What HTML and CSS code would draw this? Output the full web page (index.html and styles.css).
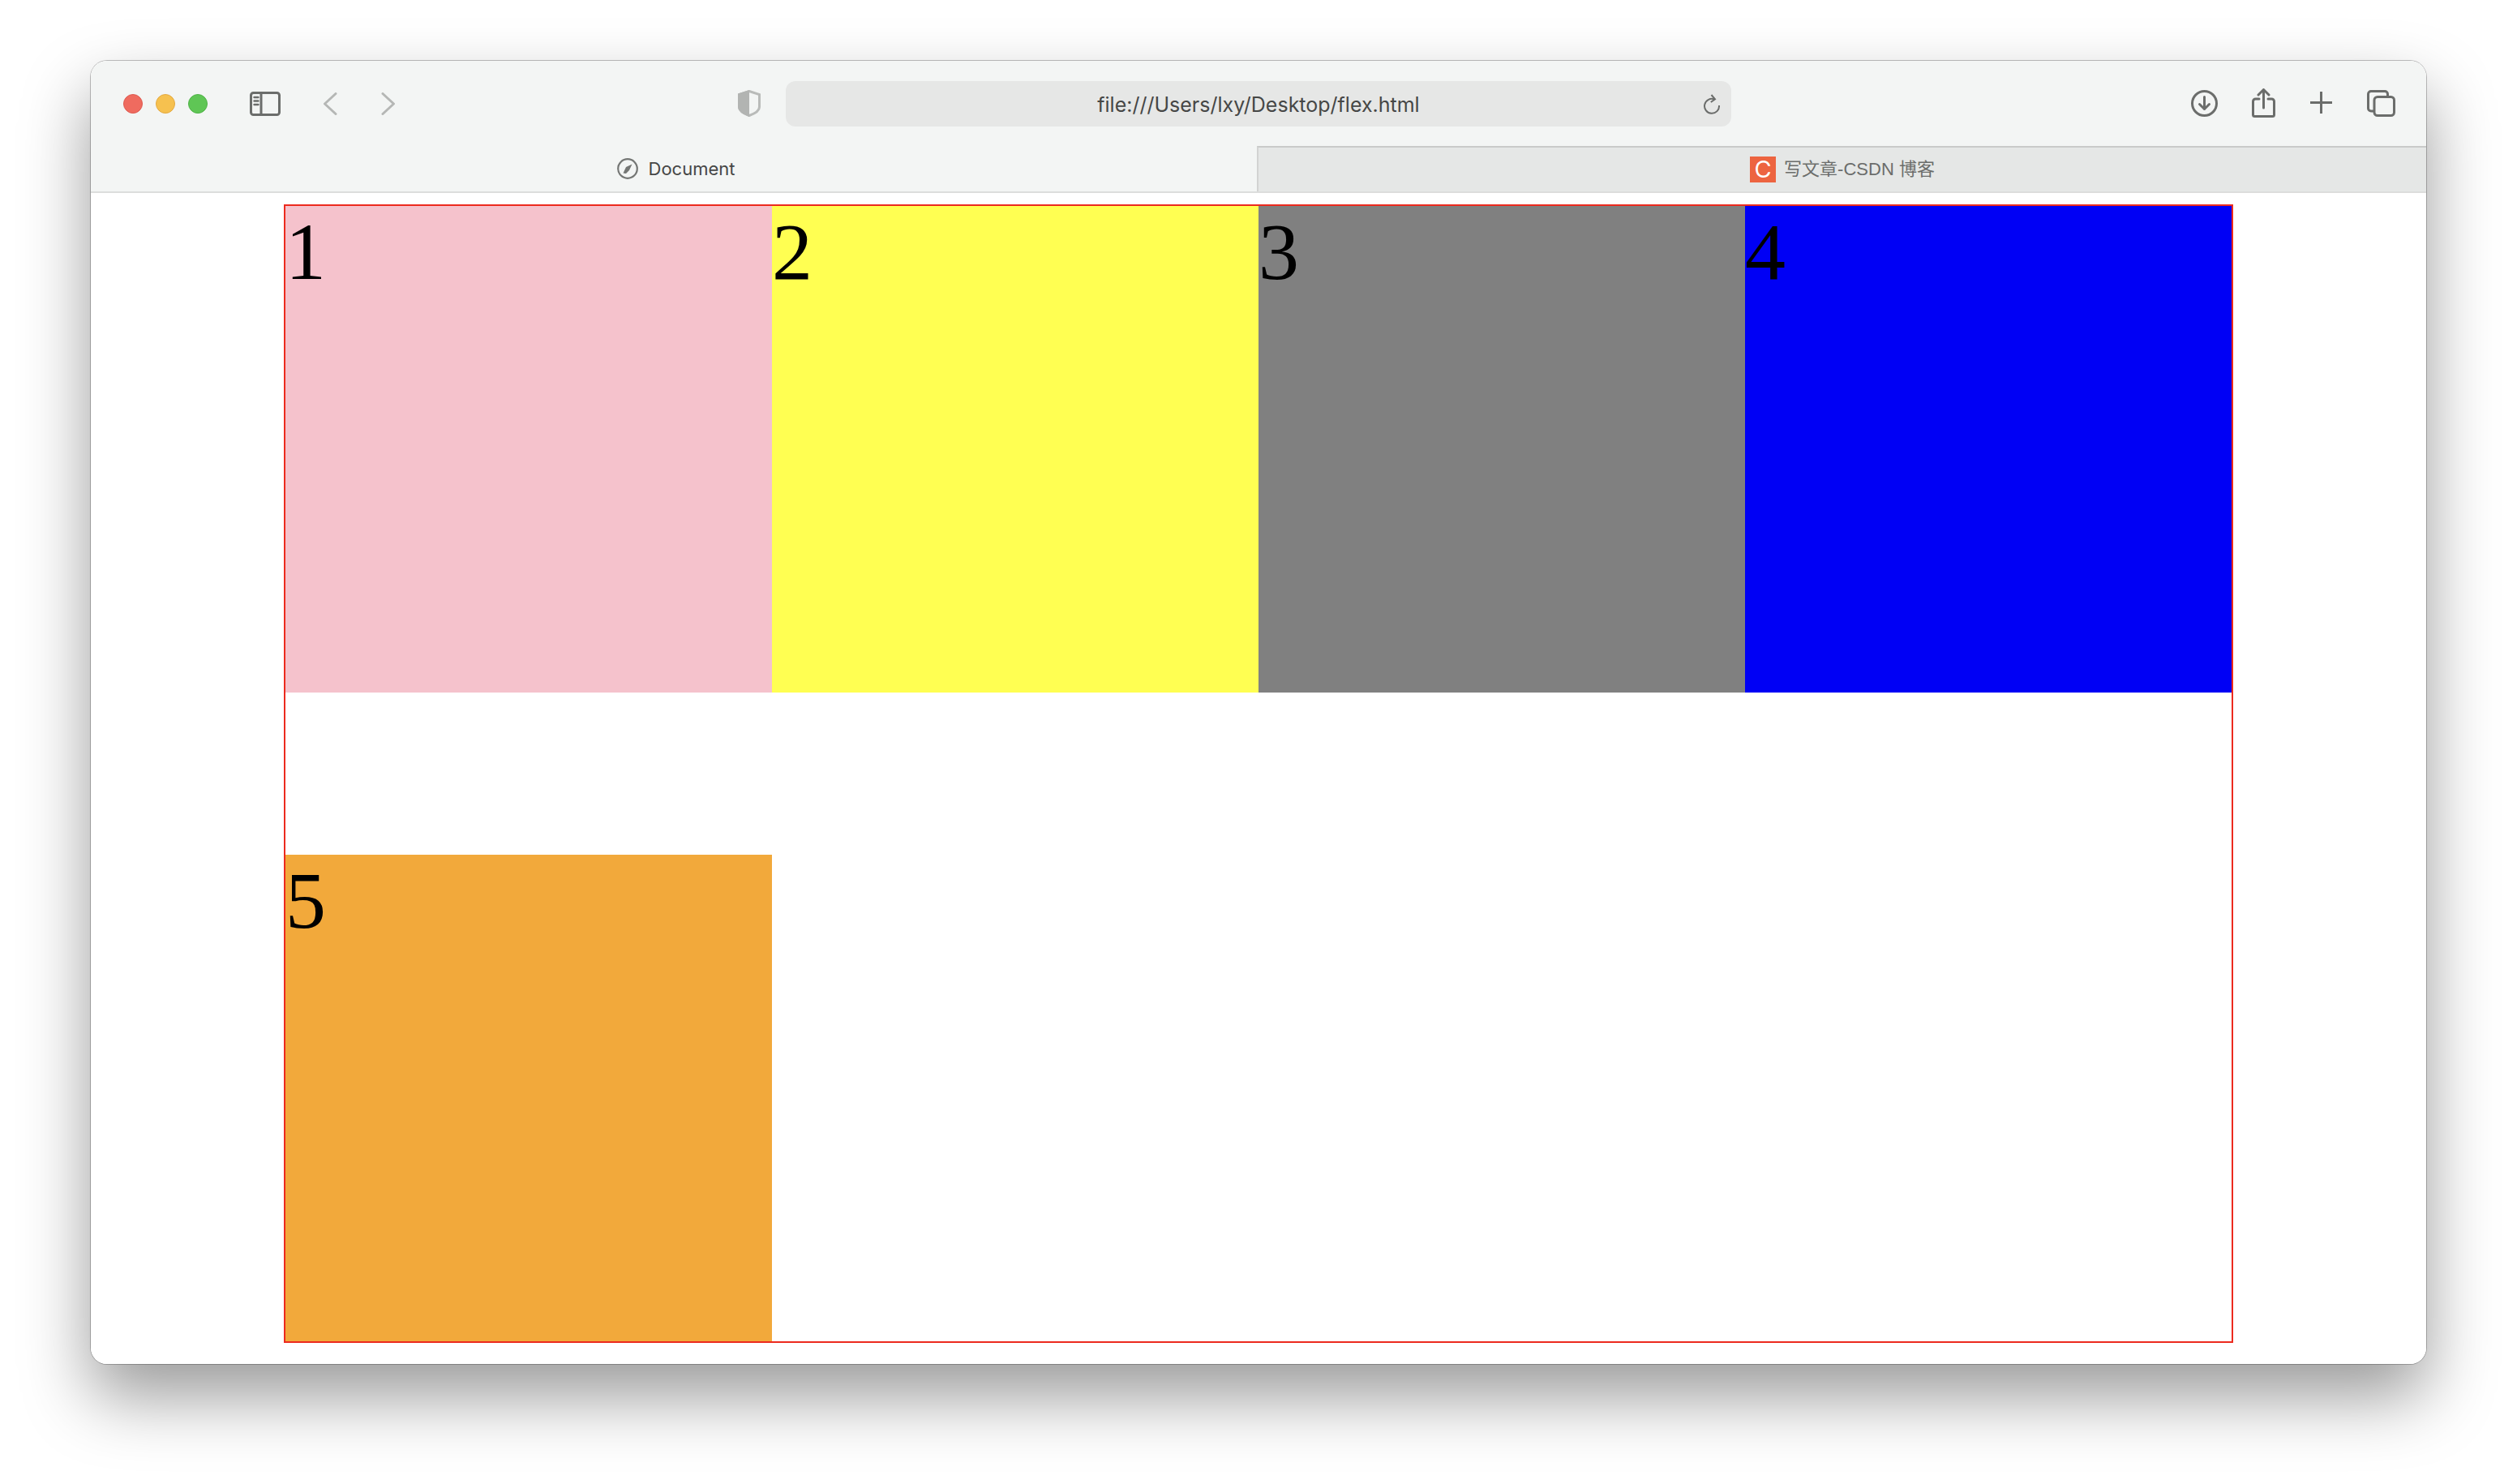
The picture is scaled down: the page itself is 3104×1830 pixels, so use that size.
FILE: index.html
```html
<!DOCTYPE html>
<html lang="en">
<head>
<meta charset="utf-8">
<title>Document</title>
<link rel="stylesheet" href="styles.css">
</head>
<body>
<div class="window">
  <header class="toolbar">
    <div class="lights">
      <span class="light light-red"></span>
      <span class="light light-yellow"></span>
      <span class="light light-green"></span>
    </div>
    <svg class="icon icon-sidebar" viewBox="0 0 38 30"><rect x="1.5" y="1.5" width="35" height="27" rx="3"/><path d="M14 1.5v27"/><path class="thin" d="M5.5 7h5M5.5 11.5h5M5.5 16h5"/></svg>
    <svg class="icon icon-back" viewBox="0 0 18 28"><path d="M16 1.5 2.5 14 16 26.500"/></svg>
    <svg class="icon icon-forward" viewBox="0 0 18 28"><path d="M2 1.500 15.500 14 2 26.500"/></svg>
    <svg class="icon-shield" viewBox="0 0 28 33"><path class="shield-line" d="M14 1.500 26.500 5.500V21C26.500 25 21 29 14 31.500 7 29 1.500 25 1.500 21V5.500Z"/><path class="shield-fill" d="M14 0 0 4.500V21C0 26 7 30.500 14 33Z"/></svg>
    <div class="address">
      <span class="url">file:///Users/lxy/Desktop/flex.html</span>
      <svg class="icon-reload" viewBox="0 0 22 25"><path d="M14.500 6.500A9 9 0 1 0 20 14"/><path d="M10.500 1 15 6.300 9.800 10"/></svg>
    </div>
    <div class="spacer"></div>
    <svg class="icon icon-download" viewBox="0 0 33 33"><circle cx="16.500" cy="16.500" r="15"/><path d="M16.500 8.500v15M10.500 17.500l6 6 6-6"/></svg>
    <svg class="icon icon-share" viewBox="0 0 29 36"><path d="M9 13H4.500A3 3 0 0 0 1.500 16v16.500a2 2 0 0 0 2 2h22a2 2 0 0 0 2-2V16a3 3 0 0 0-3-3H20"/><path d="M14.500 24V2M8 8l6.500-6.500L21 8"/></svg>
    <svg class="icon icon-plus" viewBox="0 0 27 27"><path d="M13.500 0v27M0 13.500h27"/></svg>
    <svg class="icon icon-tabs" viewBox="0 0 35 33"><path d="M8 26H5a3.500 3.500 0 0 1-3.500-3.500V5A3.500 3.500 0 0 1 5 1.500h17A3.500 3.500 0 0 1 25.500 5v3"/><rect x="9" y="8.500" width="24.500" height="23" rx="4"/></svg>
  </header>
  <nav class="tabs">
    <div class="tab tab-active">
      <svg class="icon-compass" viewBox="0 0 26 26"><circle cx="13" cy="13" r="11.800"/><path class="needle" d="M18.500 7.500 15 15 11 19 7.500 18.500 11 11Z"/></svg>
      <span>Document</span>
    </div>
    <div class="tab tab-inactive">
      <span class="favicon">C</span>
      <span class="tab-title">写文章-CSDN 博客</span>
    </div>
  </nav>
  <main class="page">
    <div class="flex-box">
      <div class="item item-pink">1</div>
      <div class="item item-yellow">2</div>
      <div class="item item-gray">3</div>
      <div class="item item-blue">4</div>
      <div class="item item-orange">5</div>
    </div>
  </main>
</div>
</body>
</html>
```

FILE: styles.css
```css
html, body {
  margin: 0;
  height: 1830px;
  overflow: hidden;
  background: #fff;
}

.window {
  position: relative;
  box-sizing: border-box;
  width: 2880px;
  height: 1607px;
  margin: 75px 0 0 112px;
  display: flex;
  flex-direction: column;
  border-radius: 20px;
  overflow: hidden;
  background: #fff;
}

body::before {
  content: "";
  position: absolute;
  left: 112px;
  top: 75px;
  width: 2880px;
  height: 1607px;
  border-radius: 20px;
  box-shadow: 0 40px 84px rgba(0, 0, 0, .4), 0 0 0 1px rgba(0, 0, 0, .24);
}

.toolbar {
  flex: none;
  height: 105px;
  box-sizing: border-box;
  padding: 0 38px 0 40px;
  display: flex;
  align-items: center;
  background: #f3f5f4;
}

.lights {
  display: flex;
  gap: 16px;
}

.light {
  box-sizing: border-box;
  width: 24px;
  height: 24px;
  border-radius: 50%;
  border: 1px solid;
}

.light-red { background: #ef6b5f; border-color: #de5a50; }
.light-yellow { background: #f6c14f; border-color: #e3a93f; }
.light-green { background: #5fc655; border-color: #4fb247; }

.icon {
  flex: none;
  fill: none;
  stroke: #6b6d6b;
  stroke-width: 3;
  stroke-linecap: round;
  stroke-linejoin: round;
}

.icon-sidebar { width: 38px; height: 30px; margin-left: 52px; }
.icon-sidebar .thin { stroke-width: 2.4; }
.icon-back { width: 18px; height: 28px; margin-left: 52px; stroke: #b5b7b5; }
.icon-forward { width: 18px; height: 28px; margin-left: 54px; stroke: #b5b7b5; }

.icon-shield {
  flex: none;
  width: 28px;
  height: 33px;
  margin-left: 422px;
}

.shield-line { fill: none; stroke: #b9bbb9; stroke-width: 3; }
.shield-fill { fill: #b2b4b2; }

.address {
  flex: none;
  position: relative;
  width: 1166px;
  height: 56px;
  margin: 0 0 -1px 31px;
  border-radius: 12px;
  background: #e6e7e6;
  display: flex;
  align-items: center;
  justify-content: center;
}

.url {
  font: 25px/1 Inter, "Liberation Sans", sans-serif;
  color: #464746;
  position: relative;
  top: 1px;
}

.icon-reload {
  position: absolute;
  right: 13px;
  top: 16px;
  width: 22px;
  height: 25px;
  fill: none;
  stroke: #6b6d6b;
  stroke-width: 2;
}

.spacer { flex: 1; }

.icon-download { width: 33px; height: 33px; }
.icon-share { width: 29px; height: 36px; margin-left: 42px; margin-top: -2px; }
.icon-plus { width: 27px; height: 27px; margin-left: 43px; margin-top: -3px; }
.icon-tabs { width: 35px; height: 33px; margin-left: 43px; }

.tabs {
  flex: none;
  display: flex;
  height: 58px;
  box-sizing: border-box;
  border-bottom: 2px solid #dcdddc;
  background: #f3f5f4;
}

.tab {
  display: flex;
  align-items: center;
  justify-content: center;
  font: 22px/1 Inter, "Noto Sans CJK SC", sans-serif;
}

.tab-active {
  flex: 0 0 1438px;
  gap: 13px;
  color: #464746;
  padding-left: 5px;
  box-sizing: border-box;
}

.tab-inactive {
  flex: 1;
  gap: 10px;
  color: #6b6d6b;
  background: #e5e7e6;
  border-top: 2px solid #c9cac9;
  border-left: 2px solid #d2d3d2;
  box-sizing: border-box;
}

.icon-compass {
  flex: none;
  width: 26px;
  height: 26px;
  fill: none;
  stroke: #747674;
  stroke-width: 2.2;
}

.needle { fill: #747674; stroke: none; }

.favicon {
  flex: none;
  width: 32px;
  height: 32px;
  background: #ed6440;
  color: #fff;
  font: 400 29px/32px Inter, sans-serif;
  text-align: center;
}

.tab-title {
  font-family: "Liberation Sans", "Noto Sans CJK SC", sans-serif;
  font-size: 22px;
}

.page {
  flex: 1;
  padding-top: 14px;
}

.flex-box {
  box-sizing: border-box;
  width: 2404px;
  height: 1404px;
  margin: 0 auto;
  border: 2px solid #ec2a1e;
  display: flex;
  flex-wrap: wrap;
  align-content: space-between;
}

.item {
  width: 600px;
  height: 600px;
  font: 100px/114px "Liberation Serif", "Times New Roman", serif;
  color: #000;
}

.item-pink { background: #f5c2cc; }
.item-yellow { background: #ffff52; }
.item-gray { background: #808080; }
.item-blue { background: #0000f5; }
.item-orange { background: #f2a93b; }
```
